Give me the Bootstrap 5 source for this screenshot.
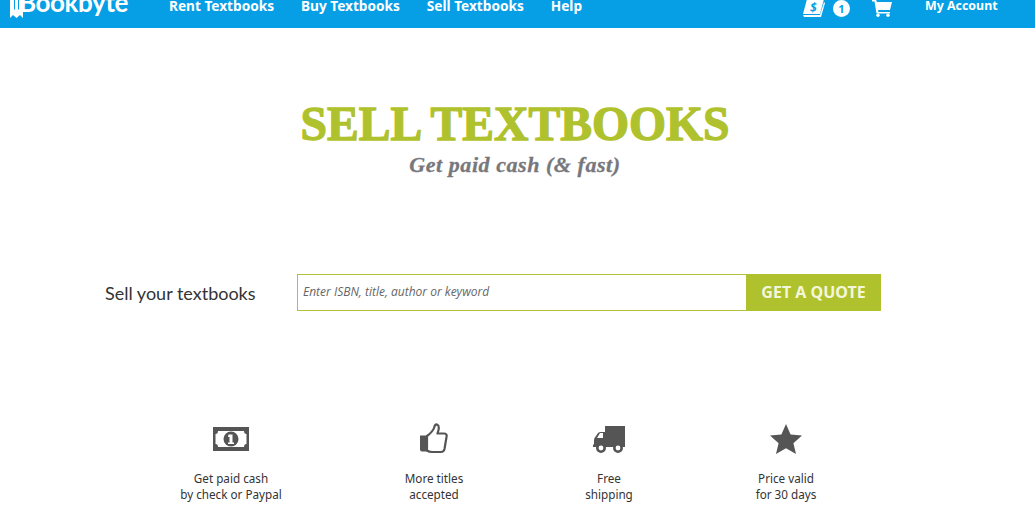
<!DOCTYPE html>
<html lang="en">
<head>
<meta charset="utf-8">
<title>Sell Textbooks</title>
<link rel="stylesheet" href="https://cdn.jsdelivr.net/npm/bootstrap@5.3.0/dist/css/bootstrap.min.css">
<style>
body { background: #fff; font-family: "Noto Sans", sans-serif; overflow: hidden; }
.bb-bar { background: #069fe6; height: 28px; overflow: hidden; padding: 0 0 0 10px; flex-wrap: nowrap; align-items: flex-start; justify-content: flex-start; }
.bb-logo { display: flex; width: 159px; color: #fff; font: 700 26px/4px Lato, sans-serif; }
.bb-logo svg { flex: none; position: relative; }
.bb-logo span { margin-left: -4px; letter-spacing: -.4px; }
.bb-links { gap: 27px; flex-direction: row; }
.bb-links a, .bb-acct { color: #fff; font: 700 13.65px/12px "Noto Sans", sans-serif; text-decoration: none; padding: 0; display: block; }
.bb-tools { margin-left: 220px; }
.bb-num { width: 17px; height: 17px; background: #fff; color: #069fe6; border-radius: 50%; font: 700 11px/17px "Noto Sans", sans-serif; text-align: center; margin: 0 22px 0 8px; }
.bb-acct { margin-left: 33px; font-size: 12.4px; }
.bb-head { padding: 69px 5px 0 0; }
.bb-head h1 { color: #afc22d; font: 700 47.6px/54px "Liberation Serif", serif; -webkit-text-stroke: 1.3px #afc22d; margin: 0; white-space: nowrap; }
.bb-head p { color: #77777c; font: italic 700 22px/26px "Liberation Serif", serif; -webkit-text-stroke: .3px #77777c; margin: 1px 0 0; letter-spacing: .55px; }
.bb-form { padding: 96px 0 0 105px; }
.bb-form label { width: 192px; font: 400 18px/24px Lato, sans-serif; color: #333; padding-top: 7px; margin: 0; }
.bb-form input { width: 449px; flex: none; height: 37px; border: 1px solid #b3c03c; border-right: 0; border-radius: 0; font: italic 400 12px "Open Sans", sans-serif; padding: 0 5px 3px; box-shadow: none; }
.bb-form input::placeholder { color: #666; }
.bb-form button { width: 135px; height: 37px; background: #afc22d; color: #f4f6dc; border: 0; border-radius: 0; font: 700 16px/37px "Noto Sans", sans-serif; padding: 0; }
.bb-perks { display: grid; grid-template-columns: 202px 204px 146px 208px; padding: 111px 0 0 130px; }
.bb-perk { text-align: center; color: #333; font: 400 11.7px/16px "Noto Sans", sans-serif; }
.bb-perk svg { display: block; margin: 0 auto 14px; height: 34px; fill: #555; }
</style>
</head>
<body>
<nav class="navbar bb-bar">
    <a class="bb-logo text-decoration-none" href="#">
        <svg width="13" height="18" viewBox="0 0 13 18"><path fill="#fff" d="M0 0h4v9l1 1V0h3v10l1-1V0h4v18l-3-3-3.500 3-3.500-3-3 3z"/></svg>
        <span>Bookbyte</span>
    </a>
    <ul class="navbar-nav bb-links">
        <li class="nav-item"><a class="nav-link" href="#">Rent Textbooks</a></li>
        <li class="nav-item"><a class="nav-link" href="#">Buy Textbooks</a></li>
        <li class="nav-item"><a class="nav-link" href="#">Sell Textbooks</a></li>
        <li class="nav-item"><a class="nav-link" href="#">Help</a></li>
    </ul>
    <div class="d-flex align-items-start bb-tools">
        <svg width="23" height="18" viewBox="0 0 23 18"><path fill="#fff" d="M5-1h17l-4 15H1zM1 15h17l4-13 1 1-4 14H2z"/><text x="8" y="12" font-size="12" font-weight="700" font-style="italic" fill="#069fe6" font-family="Noto Sans">$</text></svg>
        <div class="bb-num">1</div>
        <svg width="20" height="17" viewBox="0 0 20 17"><path fill="#fff" d="M0 0h4l1 2h15l-2 8H6l.4 2H18v1.500H4.500L2.500 1.500H0z"/><circle cx="6" cy="15.300" r="1.700" fill="#fff"/><circle cx="16" cy="15.300" r="1.700" fill="#fff"/></svg>
        <a class="bb-acct" href="#">My Account</a>
    </div>
</nav>

<header class="bb-head text-center">
    <h1>SELL TEXTBOOKS</h1>
    <p>Get paid cash (&amp; fast)</p>
</header>

<form class="d-flex align-items-start bb-form" autocomplete="off">
    <label for="isbn">Sell your textbooks</label>
    <input type="text" id="isbn" class="form-control" placeholder="Enter ISBN, title, author or keyword">
    <button type="button" class="btn">GET A QUOTE</button>
</form>

<section class="bb-perks">
    <div class="bb-perk">
        <svg width="36" height="34" viewBox="0 0 36 34"><path fill-rule="evenodd" d="M0 5h36v24H0zM5 9q0 3-2.500 3v10q2.500 0 2.500 3h26q0-3 2.500-3V12Q31 12 31 9z"/><circle cx="18" cy="17" r="7.500"/><path fill="#fff" d="M15.500 12.500h4v8h1.500V22h-6v-1.500h1.500v-5.500h-1.500z"/></svg>
        Get paid cash<br>by check or Paypal
    </div>
    <div class="bb-perk">
        <svg width="28" height="34" viewBox="0 0 28 34"><path d="M0 13.500h7v16H2q-2 0-2-2z"/><path fill="none" stroke="#555" stroke-width="2.200" stroke-linejoin="round" d="M7 14c4-3 6-5 7-8 .5-2 1-4 3-3.500 2.500 1 2 5 .5 9h7c2 0 2.500 2 2 3.500l-2 12c-.5 2-1.500 3-3.500 3H12q-3 0-5-1.500z"/></svg>
        More titles<br>accepted
    </div>
    <div class="bb-perk">
        <svg width="32" height="34" viewBox="0 0 32 34"><path fill-rule="evenodd" d="M12 4h20v21H0v-2l1-1v-4q0-2 2-4l2-3q1-1 3-1h4zM4 16h6v-5H7z"/><circle cx="8" cy="26" r="3.700" fill="#fff" stroke="#555" stroke-width="2.600"/><circle cx="25" cy="26" r="3.700" fill="#fff" stroke="#555" stroke-width="2.600"/></svg>
        Free<br>shipping
    </div>
    <div class="bb-perk">
        <svg width="32" height="34" viewBox="0 0 32 34"><path d="M16 2l4.600 10.500L32 13.600l-8.600 7.600L26 32l-10-5.800L6 32l2.600-10.800L0 13.600l11.400-1.100z"/></svg>
        Price valid<br>for 30 days
    </div>
</section>
<script src="https://cdn.jsdelivr.net/npm/bootstrap@5.3.0/dist/js/bootstrap.bundle.min.js"></script>
</body>
</html>
